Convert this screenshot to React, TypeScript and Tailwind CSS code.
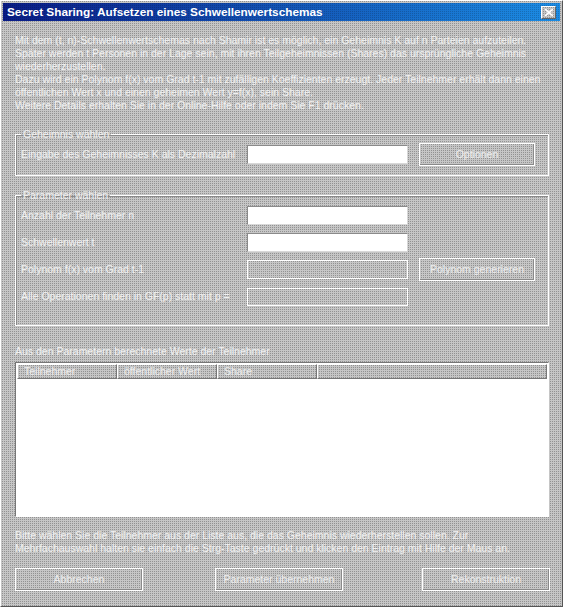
import React from 'react';

const dots = 'bg-[conic-gradient(#929292_0_25%,#c6c6c6_0)] bg-[length:2px_2px]';

const Field = ({ disabled }: { disabled?: boolean }) => (
    <div
        className={`w-[161px] h-[19px] border ${
            disabled ? `${dots} border-white` : 'bg-white border-[#8a8a8a] border-r-[#d8d8d8] border-b-[#d8d8d8]'
        }`}
    />
);

const Btn = ({ label, w }: { label: string; w: string }) => (
    <button
        className={`${w} h-[23px] border border-white shadow-[inset_-1px_-1px_0_#8a8a8a] ${dots} text-[#eeeeee] text-[10.5px] leading-none`}
    >
        {label}
    </button>
);

const Row = ({ label, children }: { label: string; children: React.ReactNode }) => (
    <div className="flex items-center h-[27px]">
        <span className="w-[231px] pl-[5px] whitespace-nowrap">{label}</span>
        {children}
    </div>
);

const Col = ({ label, w }: { label: string; w: string }) => (
    <div className={`${w} h-[15px] border border-white border-r-[#777] border-b-[#777] ${dots} pl-[6px] text-[10.5px] leading-[13px] text-[#eeeeee]`}>
        {label}
    </div>
);

export default function App() {
    return (
        <div
            className={`w-[563px] h-[607px] ${dots} border border-white border-r-[#555] border-b-[#555] text-[#f2f2f2] text-[10.5px] leading-[13px] font-['Liberation_Sans',Arial,sans-serif] overflow-hidden`}
        >
            {/* Title bar */}
            <div className="mx-[2px] mt-[2px] h-[18px] flex items-center justify-between pl-[4px] pr-[4px] bg-[conic-gradient(rgba(0,0,0,0.18)_0_25%,transparent_0),linear-gradient(to_right,#0a1c86,#1c8ce4)] bg-[length:2px_2px,100%_100%]">
                <span className="text-white font-bold text-[11.8px]">
                    Secret Sharing: Aufsetzen eines Schwellenwertschemas
                </span>
                <div className={`w-[15px] h-[13px] ${dots} border border-white border-r-[#666] border-b-[#666] flex items-center justify-center`}>
                    <svg width="8" height="7" viewBox="0 0 8 7">
                        <path d="M0 0 L8 7 M8 0 L0 7" stroke="white" strokeWidth="1.6" />
                    </svg>
                </div>
            </div>

            <div className="pl-[14px] pr-[13px]">
                <div className="mt-[13px] whitespace-nowrap">
                    <p>Mit dem (t, n)-Schwellenwertschemas nach Shamir ist es möglich, ein Geheimnis K auf n Parteien aufzuteilen.</p>
                    <p>Später werden t Personen in der Lage sein, mit ihren Teilgeheimnissen (Shares) das ursprüngliche Geheimnis</p>
                    <p>wiederherzustellen.</p>
                    <p>Dazu wird ein Polynom f(x) vom Grad t-1 mit zufälligen Koeffizienten erzeugt. Jeder Teilnehmer erhält dann einen</p>
                    <p>öffentlichen Wert x und einen geheimen Wert y=f(x), sein Share.</p>
                    <p>Weitere Details erhalten Sie in der Online-Hilfe oder indem Sie F1 drücken.</p>
                </div>

                {/* Geheimnis */}
                <fieldset className="mt-[16px] h-[48px] border border-white shadow-[inset_1px_1px_0_#8a8a8a] px-0">
                    <legend className="ml-[5px] px-[2px]">Geheimnis wählen</legend>
                    <div className="flex items-center h-[27px]">
                        <span className="w-[231px] pl-[5px] whitespace-nowrap">Eingabe des Geheimnisses K als Dezimalzahl</span>
                        <Field />
                        <div className="ml-[11px]">
                            <Btn label="Optionen" w="w-[116px]" />
                        </div>
                    </div>
                </fieldset>

                {/* Parameter */}
                <fieldset className="mt-[13px] h-[137px] border border-white shadow-[inset_1px_1px_0_#8a8a8a] px-0">
                    <legend className="ml-[5px] px-[2px]">Parameter wählen</legend>
                    <Row label="Anzahl der Teilnehmer n">
                        <Field />
                    </Row>
                    <Row label="Schwellenwert t">
                        <Field />
                    </Row>
                    <Row label="Polynom f(x) vom Grad t-1">
                        <Field disabled />
                        <div className="ml-[11px]">
                            <Btn label="Polynom generieren" w="w-[116px]" />
                        </div>
                    </Row>
                    <Row label="Alle Operationen finden in GF(p) statt mit p =">
                        <div className="w-[161px] h-[18px] border border-white" />
                    </Row>
                </fieldset>

                <p className="mt-[19px] whitespace-nowrap">Aus den Parametern berechnete Werte der Teilnehmer</p>

                {/* List */}
                <div className="mt-[4px] w-[534px] h-[155px] bg-white border border-[#777] border-r-white border-b-white p-[1px]">
                    <div className="flex">
                        <Col label="Teilnehmer" w="w-[100px]" />
                        <Col label="öffentlicher Wert" w="w-[100px]" />
                        <Col label="Share" w="w-[100px]" />
                        <Col label="" w="flex-1" />
                    </div>
                </div>

                <div className="mt-[12px] whitespace-nowrap">
                    <p>Bitte wählen Sie die Teilnehmer aus der Liste aus, die das Geheimnis wiederherstellen sollen. Zur</p>
                    <p>Mehrfachauswahl halten sie einfach die Strg-Taste gedrückt und klicken den Eintrag mit Hilfe der Maus an.</p>
                </div>

                <div className="mt-[13px] flex items-center w-[535px]">
                    <Btn label="Abbrechen" w="w-[128px]" />
                    <div className="ml-[72px]">
                        <Btn label="Parameter übernehmen" w="w-[128px]" />
                    </div>
                    <div className="flex-1" />
                    <Btn label="Rekonstruktion" w="w-[128px]" />
                </div>
            </div>
        </div>
    );
}
